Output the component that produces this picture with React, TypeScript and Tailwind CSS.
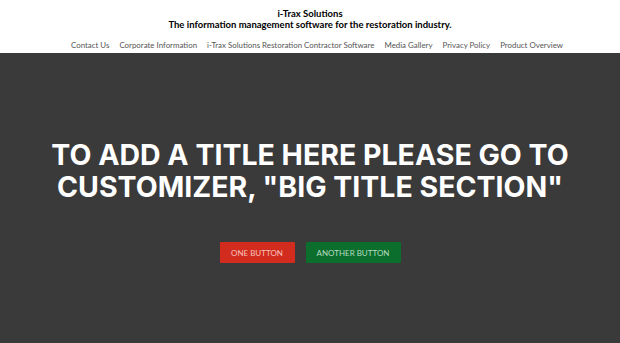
import React from 'react';

const navItems = [
  'Contact Us',
  'Corporate Information',
  'i-Trax Solutions Restoration Contractor Software',
  'Media Gallery',
  'Privacy Policy',
  'Product Overview',
];

export default function App() {
  return (
    <div className="w-[620px] h-[343px] flex flex-col bg-white" style={{ fontFamily: 'Lato, "Liberation Sans", sans-serif' }}>
      <header className="h-[53px] flex flex-col items-center shrink-0">
        <div className="pt-[8px] text-[9.5px] font-bold leading-[11px] text-black">i-Trax Solutions</div>
        <div className="text-[9.5px] font-bold leading-[12px] text-black">
          The information management software for the restoration industry.
        </div>
        <nav className="mt-[9px] ml-[14px] flex gap-[10px] text-[7.9px] leading-[10px] text-[#555]">
          {navItems.map((n) => (
            <a key={n}>{n}</a>
          ))}
        </nav>
      </header>
      <main className="flex-1 bg-[#3a3a3a] flex flex-col items-center">
        <h1
          className="mt-[86px] text-center text-white font-bold text-[28.5px] leading-[32px] uppercase"
          style={{ fontFamily: 'Inter, "Open Sans", sans-serif' }}
        >
          To add a title here please go to
          <br />
          customizer, "Big title section"
        </h1>
        <div className="mt-[39px] flex gap-[11px]">
          <a className="w-[75px] h-[21px] flex items-center justify-center bg-[#d22c1f] text-[#f6c3bd] text-[8px] rounded-[1px]">
            ONE BUTTON
          </a>
          <a className="w-[95px] h-[21px] flex items-center justify-center bg-[#0b6e2d] text-[#b7dcc0] text-[8px] rounded-[1px]">
            ANOTHER BUTTON
          </a>
        </div>
      </main>
    </div>
  );
}
